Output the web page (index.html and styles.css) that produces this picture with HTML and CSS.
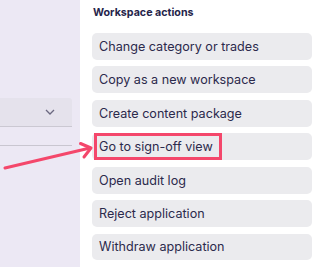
FILE: index.html
```html
<!DOCTYPE html>
<html lang="en">
<head>
    <meta charset="UTF-8">
    <meta name="viewport" content="width=device-width, initial-scale=1.0">
    <title>Workspace actions</title>
    <link rel="stylesheet" href="styles.css">
</head>
<body>
    <div class="page">
        <aside class="side">
            <div class="select">
                <svg class="chevron" width="10" height="6" viewBox="0 0 10 6">
                    <path d="M1 1 L5 5 L9 1" fill="none" stroke="#6b6880" stroke-width="1.3"/>
                </svg>
            </div>
            <div class="divider"></div>
        </aside>
        <main class="actions">
            <h2 class="title">Workspace actions</h2>
            <button class="action">Change category or trades</button>
            <button class="action">Copy as a new workspace</button>
            <button class="action">Create content package</button>
            <button class="action">Go to sign-off view</button>
            <button class="action">Open audit log</button>
            <button class="action">Reject application</button>
            <button class="action">Withdraw application</button>
        </main>
        <div class="highlight-box"></div>
        <svg class="arrow" width="316" height="267" viewBox="0 0 316 267">
            <path d="M5 168 L90 148" fill="none" stroke="#f4476b" stroke-width="3" stroke-linecap="round"/>
            <path d="M80.5 143.5 L91 148 L84 157" fill="none" stroke="#f4476b" stroke-width="3" stroke-linecap="round" stroke-linejoin="round"/>
        </svg>
    </div>
</body>
</html>
```

FILE: styles.css
```css
body {
    margin: 0;
    font-family: Inter, "Noto Sans", Arial, sans-serif;
    background-color: #fff;
    color: #2b2a4c;
}
.page {
    display: flex;
    width: 316px;
    height: 267px;
    overflow: hidden;
}
.side {
    width: 80px;
    flex-shrink: 0;
    background-color: #ece8f4;
    padding-top: 98px;
    box-sizing: border-box;
}
.select {
    width: 72px;
    height: 29px;
    background-color: #e5e2ec;
    border-bottom: 1px solid #cbc8d2;
    border-radius: 0 3px 0 0;
    display: flex;
    align-items: center;
    padding-left: 45px;
    box-sizing: border-box;
}
.divider {
    width: 72px;
    height: 1px;
    margin-top: 18px;
    background-color: #c9c6d0;
}
.actions {
    flex: 1;
    padding: 6px 4px 0 12px;
    display: flex;
    flex-direction: column;
}
.title {
    margin: 0 0 13px 1px;
    font-size: 10.7px;
    font-weight: 700;
    line-height: 14px;
    color: #25244a;
}
.action {
    height: 27px;
    margin-bottom: 6.6px;
    padding: 0 7px;
    border: none;
    border-radius: 5px;
    background-color: #ebebee;
    color: #2b2a4c;
    font-family: inherit;
    font-size: 12.6px;
    text-align: left;
}
.highlight-box {
    position: absolute;
    left: 94px;
    top: 133px;
    width: 122px;
    height: 21px;
    border: 3px solid #f4476b;
}
.arrow {
    position: absolute;
    left: 0;
    top: 0;
    pointer-events: none;
}
```
